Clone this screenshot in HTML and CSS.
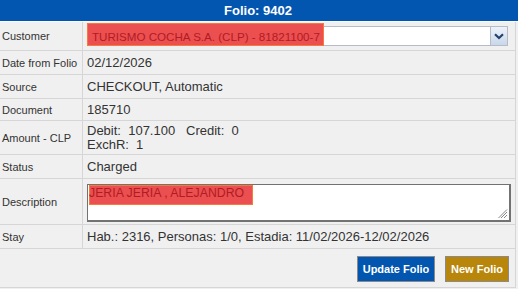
FILE: index.html
```html
<!DOCTYPE html>
<html>
<head>
<meta charset="utf-8">
<link rel="stylesheet" href="styles.css">
</head>
<body>
<div class="panel">
  <div class="header">Folio: 9402</div>
  <div class="body">
    <div class="row row-customer">
      <div class="label">Customer</div>
      <div class="value">
        <div class="select">
          <span class="select-text">TURISMO COCHA S.A. (CLP) - 81821100-7</span>
          <span class="select-btn">
            <svg width="10" height="7" viewBox="0 0 10 7"><path d="M1 1.2 L5 5 L9 1.2" fill="none" stroke="#26406e" stroke-width="2.2"/></svg>
          </span>
          <span class="hl hl-customer"></span>
        </div>
      </div>
    </div>
    <div class="row">
      <div class="label">Date from Folio</div>
      <div class="value">02/12/2026</div>
    </div>
    <div class="row">
      <div class="label">Source</div>
      <div class="value">CHECKOUT, Automatic</div>
    </div>
    <div class="row row-doc">
      <div class="label">Document</div>
      <div class="value">185710</div>
    </div>
    <div class="row row-amount">
      <div class="label">Amount - CLP</div>
      <div class="value amount">
        <div class="amount-line">Debit:&nbsp; 107.100 &nbsp; Credit:&nbsp; 0</div>
        <div class="amount-line">ExchR:&nbsp; 1</div>
      </div>
    </div>
    <div class="row">
      <div class="label">Status</div>
      <div class="value">Charged</div>
    </div>
    <div class="row row-desc">
      <div class="label">Description</div>
      <div class="value">
        <div class="textarea">
          <span class="desc-text">JERIA JERIA , ALEJANDRO</span>
          <span class="hl hl-desc"></span>
          <svg class="grip" width="10" height="10" viewBox="0 0 10 10"><path d="M9 3 L3 9 M9 6 L6 9 M9 0.5 L0.5 9" stroke="#888" stroke-width="1"/></svg>
        </div>
      </div>
    </div>
    <div class="row">
      <div class="label">Stay</div>
      <div class="value">Hab.: 2316, Personas: 1/0, Estadia: 11/02/2026-12/02/2026</div>
    </div>
    <div class="actions">
      <button class="btn btn-update">Update Folio</button>
      <button class="btn btn-new">New Folio</button>
    </div>
  </div>
</div>
</body>
</html>
```

FILE: styles.css
```css
* { box-sizing: border-box; }
html, body { margin: 0; padding: 0; }
body {
  background: #f0f0f0;
  font-family: "Liberation Sans", Arial, sans-serif;
  color: #333;
  width: 518px;
  height: 289px;
  overflow: hidden;
}
.panel { width: 518px; }
.header {
  height: 22px;
  background: #0356b0;
  border-bottom: 1px solid #f8f8f8;
  color: #fff;
  font-weight: bold;
  font-size: 13px;
  text-align: center;
  line-height: 21px;
  padding-right: 2px;
}
.body {
  width: 516px;
  border-right: 1px solid #d6d6d6;
  background: #f0f0f0;
}
.row {
  display: grid;
  grid-template-columns: 83px 1fr;
  height: 24px;
  border-bottom: 1px solid #d6d6d6;
}
.row-customer { height: 29px; }
.row-doc { height: 22px; }
.row-amount { height: 34px; }
.row-desc { height: 46px; }
.label {
  border-right: 1px solid #d6d6d6;
  font-size: 11px;
  padding-left: 2px;
  display: flex;
  align-items: center;
  color: #333;
}
.value {
  font-size: 13px;
  padding-left: 4px;
  display: flex;
  align-items: center;
  white-space: nowrap;
}
.amount {
  display: flex;
  flex-direction: column;
  align-items: flex-start;
  justify-content: center;
  padding-top: 1px;
}
.amount-line {
  line-height: 14px;
  height: 14px;
}
.select {
  position: relative;
  width: 420px;
  height: 20px;
  background: #fff;
  border: 1px solid #b5bcc8;
  display: flex;
  align-items: center;
  margin-left: 1px;
}
.select-text {
  flex: 1;
  font-size: 11.6px;
  color: #b01c24;
  padding-left: 3px;
  position: relative;
  z-index: 2;
}
.select-btn {
  width: 17px;
  height: 18px;
  background: linear-gradient(#eef3fa, #c8d7ea);
  border-left: 1px solid #b5bcc8;
  display: flex;
  align-items: center;
  justify-content: center;
}
.hl {
  position: absolute;
  background: #ec4f4f;
  border: 1px solid #f57a3c;
  z-index: 1;
}
.hl-customer {
  left: -2px;
  top: -4px;
  width: 237px;
  height: 23px;
}
.textarea {
  position: relative;
  width: 424px;
  height: 38px;
  background: #fff;
  border: 2px solid #727272;
  border-top-width: 1px;
  border-left-width: 1px;
  margin-top: 2px;
}
.desc-text {
  position: relative;
  z-index: 2;
  font-size: 12.3px;
  color: #b01c24;
  padding-left: 1px;
  line-height: 16px;
}
.hl-desc {
  left: 1px;
  top: 0;
  width: 164px;
  height: 20px;
}
.grip {
  position: absolute;
  right: 1px;
  bottom: 1px;
}
.actions {
  height: 39px;
  border-bottom: 1px solid #d6d6d6;
  display: flex;
  justify-content: flex-end;
  align-items: center;
  gap: 10px;
  padding-right: 6px;
  padding-top: 1px;
}
.btn {
  height: 26px;
  border: 1px solid #8a8a8a;
  color: #fff;
  font-family: "Liberation Sans", Arial, sans-serif;
  font-weight: bold;
  font-size: 11px;
  padding: 0;
  margin: 0;
  white-space: nowrap;
}
.btn-update { background: #0356b0; width: 78px; }
.btn-new { background: #b8860b; width: 64px; }
```
